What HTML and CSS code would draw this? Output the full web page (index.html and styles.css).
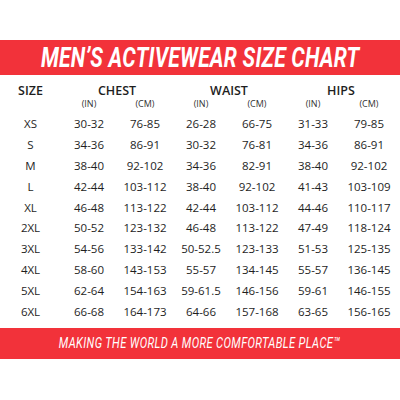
FILE: index.html
```html
<!DOCTYPE html>
<html lang="en">
<head>
<title>Men's Activewear Size Chart</title>
<meta charset="UTF-8">
<meta name="viewport" content="width=device-width, initial-scale=1">
<link rel="stylesheet" href="styles.css">
</head>
<body>
  <div class="banner">
    <h1>MEN&rsquo;S ACTIVEWEAR SIZE CHART</h1>
  </div>

  <div class="chart">
    <div class="head">SIZE</div>
    <div class="head group">CHEST</div>
    <div class="head group">WAIST</div>
    <div class="head group">HIPS</div>

    <div class="unit first">(IN)</div><div class="unit">(CM)</div>
    <div class="unit">(IN)</div><div class="unit">(CM)</div>
    <div class="unit">(IN)</div><div class="unit">(CM)</div>

    <div>XS</div><div>30-32</div><div>76-85</div><div>26-28</div><div>66-75</div><div>31-33</div><div>79-85</div>
    <div>S</div><div>34-36</div><div>86-91</div><div>30-32</div><div>76-81</div><div>34-36</div><div>86-91</div>
    <div>M</div><div>38-40</div><div>92-102</div><div>34-36</div><div>82-91</div><div>38-40</div><div>92-102</div>
    <div>L</div><div>42-44</div><div>103-112</div><div>38-40</div><div>92-102</div><div>41-43</div><div>103-109</div>
    <div>XL</div><div>46-48</div><div>113-122</div><div>42-44</div><div>103-112</div><div>44-46</div><div>110-117</div>
    <div>2XL</div><div>50-52</div><div>123-132</div><div>46-48</div><div>113-122</div><div>47-49</div><div>118-124</div>
    <div>3XL</div><div>54-56</div><div>133-142</div><div>50-52.5</div><div>123-133</div><div>51-53</div><div>125-135</div>
    <div>4XL</div><div>58-60</div><div>143-153</div><div>55-57</div><div>134-145</div><div>55-57</div><div>136-145</div>
    <div>5XL</div><div>62-64</div><div>154-163</div><div>59-61.5</div><div>146-156</div><div>59-61</div><div>146-155</div>
    <div>6XL</div><div>66-68</div><div>164-173</div><div>64-66</div><div>157-168</div><div>63-65</div><div>156-165</div>
  </div>

  <div class="footer">
    <p>MAKING THE WORLD A MORE COMFORTABLE PLACE&trade;</p>
  </div>
</body>
</html>
```

FILE: styles.css
```css
body {
  margin: 0;
  padding-top: 40px;
  background-color: #fff;
  font-family: "Open Sans", "Noto Sans", sans-serif;
  color: #1e1e1e;
}
/* red title strip */
.banner {
  background-color: #f2323a;
  height: 35px;
  display: flex;
  align-items: center;
  justify-content: center;
  overflow: hidden;
}
.banner h1 {
  margin: 0;
  color: #fff;
  font-family: Roboto, "Liberation Sans", sans-serif;
  font-style: italic;
  font-weight: bold;
  font-size: 27px;
  white-space: nowrap;
  letter-spacing: 0.3px;
  transform: scaleX(0.78); /* no condensed face installed */
}
/* the size table */
.chart {
  display: grid;
  grid-template-columns: 61px repeat(6, 56px);
  grid-template-rows: 19px 14px;
  grid-auto-rows: 20.9px;
  margin-top: 6px;
  font-size: 11.5px;
}
.chart div {
  text-align: center;
  line-height: 20.9px;
  white-space: nowrap;
}
.chart .head {
  font-weight: 600;
  font-size: 12.5px;
  line-height: 19px;
}
.chart .group {
  grid-column: span 2;
}
.chart .unit {
  font-size: 9px;
  line-height: 8px;
  color: #333;
}
.chart .unit.first {
  grid-column-start: 2;
}
.footer {
  background-color: #f2323a;
  height: 31px;
  margin-top: 5px;
  display: flex;
  align-items: center;
  justify-content: center;
  overflow: hidden;
}
.footer p {
  margin: 0;
  color: #fff;
  font-family: Roboto, "Liberation Sans", sans-serif;
  font-style: italic;
  font-size: 15.5px;
  white-space: nowrap;
  letter-spacing: 0.5px;
  transform: scaleX(0.72);
}
```
